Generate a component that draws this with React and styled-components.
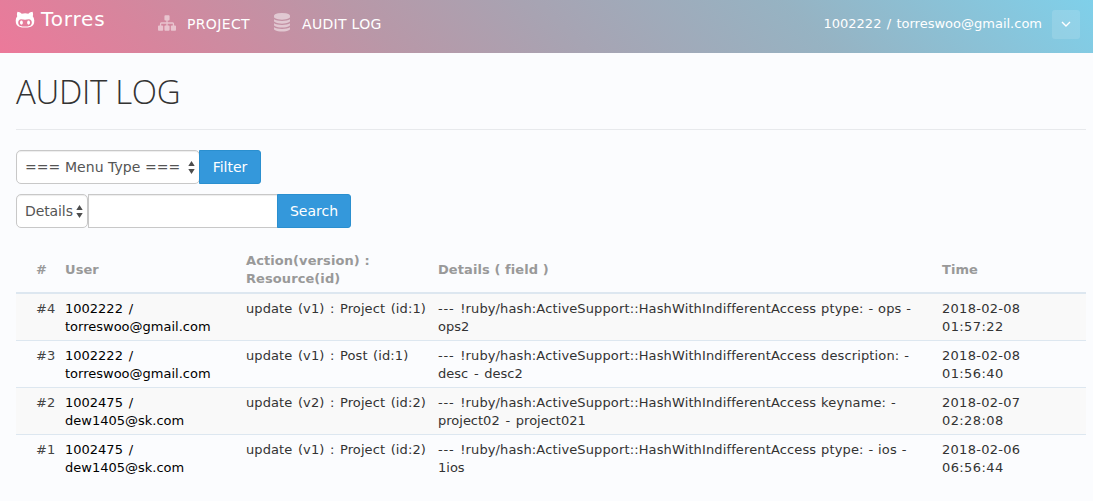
import React from "react";
import styled, { createGlobalStyle } from "styled-components";

const Global = createGlobalStyle`
  * { box-sizing: border-box; }
  html { background: #fff; }
  body { margin: 0; font-family: "DejaVu Sans", sans-serif; font-size: 13px; line-height: 18px; color: #333; overflow: hidden; }
`;

const Page = styled.div`
  height: 501px;
  background: #fbfcfe;
`;
const Navbar = styled.header`
  display: flex;
  align-items: flex-start;
  height: 53px;
  padding: 0 13px 0 15px;
  background: linear-gradient(45deg, #ec799a 0%, #d7859d 14%, #b898a8 35%, #a8a3b2 50%, #96b3c3 73%, #7fd0ea 100%);
  color: #fff;
`;
const Brand = styled.div`
  display: flex;
  align-items: center;
  gap: 6px;
  width: 143px;
  height: 38px;
  font-size: 20px;
  letter-spacing: 0.85px;
`;
const NavItem = styled.div`
  display: flex;
  align-items: center;
  height: 47px;
  width: ${(p) => p.$w}px;
  gap: ${(p) => p.$gap}px;
  font-size: 14px;
  letter-spacing: ${(p) => p.$ls}px;
  white-space: nowrap;
`;
const Account = styled.div`
  display: flex;
  align-items: center;
  gap: 10px;
  height: 48px;
  margin-left: auto;
  white-space: nowrap;
  word-spacing: 1.2px;
`;
const Toggle = styled.div`
  display: flex;
  align-items: center;
  justify-content: center;
  width: 28px;
  height: 29px;
  border-radius: 3px;
  background: rgba(255, 255, 255, 0.13);
`;
const Icon = styled.svg`
  display: block;
  flex: none;
  margin-bottom: ${(p) => p.$lift || 0}px;
  fill: ${(p) => p.$fill || "#fff"};
`;
const Main = styled.main`
  padding: 0 7px 0 16px;
`;
const Title = styled.h1`
  margin: 0 0 20px;
  height: 77px;
  padding-top: 16px;
  border-bottom: 1px solid #e7e9ec;
  font: 300 33px/46px "Open Sans", sans-serif;
  letter-spacing: -0.3px;
  color: #333;
`;
const FormRow = styled.div`
  display: flex;
  height: 34px;
  margin-bottom: 10px;
  font-size: 14px;
`;
const Field = styled.div`
  display: flex;
  align-items: center;
  justify-content: space-between;
  width: ${(p) => p.$w}px;
  padding: 0 4px 0 8px;
  border: 1px solid #c8c8c8;
  border-radius: ${(p) => (p.$square ? "0" : "5px")};
  background: #fff;
  box-shadow: inset 0 1px 1px rgba(0, 0, 0, 0.075);
  color: #555;
  letter-spacing: ${(p) => p.$ls || 0}px;
  white-space: nowrap;
`;
const Button = styled.div`
  display: flex;
  align-items: center;
  justify-content: center;
  width: ${(p) => p.$w}px;
  margin-left: -1px;
  border: 1px solid #2a8fcf;
  border-radius: 0 3px 3px 0;
  background: #3498db;
  color: #fff;
`;
const Table = styled.table`
  width: 1070px;
  margin-top: 18px;
  table-layout: fixed;
  border-collapse: separate;
  border-spacing: 0;
`;
const Th = styled.th`
  width: ${(p) => p.$w}px;
  padding: 6px 0 4px ${(p) => p.$pl || 0}px;
  border-bottom: 2px solid #dde7f0;
  text-align: left;
  vertical-align: middle;
  color: #999;
  white-space: nowrap;
  letter-spacing: 0.08px;
`;
const Row = styled.tr`
  background: ${(p) => (p.$shaded ? "#f9f9f9" : "transparent")};
`;
const Td = styled.td`
  padding: 6px 0 4px ${(p) => p.$pl || 0}px;
  border-top: ${(p) => (p.$first ? "0" : "1px")} solid #dde7f0;
  vertical-align: top;
  color: ${(p) => p.$color || "#333"};
  white-space: nowrap;
`;
const Line = styled.div`
  letter-spacing: ${(p) => p.$ls || 0}px;
  word-spacing: ${(p) => p.$ws || 0}px;
`;
const Dashes = styled.span`
  letter-spacing: 0.85px;
`;

const rows = [
  ["#4", "1002222 /", "torreswoo@gmail.com", "update (v1) : Project (id:1)", "ptype: - ops -", "ops2", "2018-02-08", "01:57:22"],
  ["#3", "1002222 /", "torreswoo@gmail.com", "update (v1) : Post (id:1)", "description: -", "desc - desc2", "2018-02-08", "01:56:40"],
  ["#2", "1002475 /", "dew1405@sk.com", "update (v2) : Project (id:2)", "keyname: -", "project02 - project021", "2018-02-07", "02:28:08"],
  ["#1", "1002475 /", "dew1405@sk.com", "update (v1) : Project (id:2)", "ptype: - ios -", "1ios", "2018-02-06", "06:56:44"],
];

const Cat = () => (
  <Icon width="20" height="20" viewBox="0 0 1792 1792">
    <path d="M704 1216q0 40-12.5 82t-43 76-72.5 34-72.5-34-43-76-12.5-82 12.5-82 43-76 72.5-34 72.5 34 43 76 12.5 82zm640 0q0 40-12.5 82t-43 76-72.5 34-72.5-34-43-76-12.5-82 12.5-82 43-76 72.5-34 72.5 34 43 76 12.5 82zm160 0q0-120-69-204t-187-84q-41 0-195 21-71 11-157 11t-157-11q-152-21-195-21-118 0-187 84t-69 204q0 88 32 153.5t81 103 122 60 140 29.5 149 7h168q82 0 149-7t140-29.5 122-60 81-103 32-153.5zm224-176q0 207-61 331-38 77-105.5 133t-141 86-170 47.5-171.5 22-167 4.5q-78 0-142-3t-147.5-12.5-152.5-30-137-51.5-121-81-86-115q-62-123-62-331 0-237 136-396-27-82-27-170 0-116 51-218 108 0 190 39.5t189 123.5q147-35 309-35 148 0 280 32 105-82 187-121t189-39q51 102 51 218 0 87-27 168 136 160 136 398z" />
  </Icon>
);
const Sitemap = () => (
  <Icon $lift={2} width="18" height="18" viewBox="0 0 1792 1792" $fill="rgba(255,255,255,.5)">
    <path d="M1792 1248v320q0 40-28 68t-68 28h-320q-40 0-68-28t-28-68v-320q0-40 28-68t68-28h96v-192h-512v192h96q40 0 68 28t28 68v320q0 40-28 68t-68 28h-320q-40 0-68-28t-28-68v-320q0-40 28-68t68-28h96v-192h-512v192h96q40 0 68 28t28 68v320q0 40-28 68t-68 28h-320q-40 0-68-28t-28-68v-320q0-40 28-68t68-28h96v-192q0-52 38-90t90-38h512v-192h-96q-40 0-68-28t-28-68v-320q0-40 28-68t68-28h320q40 0 68 28t28 68v320q0 40-28 68t-68 28h-96v192h512q52 0 90 38t38 90v192h96q40 0 68 28t28 68z" />
  </Icon>
);
const Database = () => (
  <Icon $lift={2} width="16" height="18.6" viewBox="0 0 1536 1792" $fill="rgba(255,255,255,.5)">
    <path d="M768 768q237 0 443-43t325-127v170q0 69-103 128t-280 93.5-385 34.5-385-34.5-280-93.5-103-128v-170q119 84 325 127t443 43zm0 768q237 0 443-43t325-127v170q0 69-103 128t-280 93.5-385 34.5-385-34.5-280-93.5-103-128v-170q119 84 325 127t443 43zm0-384q237 0 443-43t325-127v170q0 69-103 128t-280 93.5-385 34.5-385-34.5-280-93.5-103-128v-170q119 84 325 127t443 43zm0-1152q208 0 385 34.5t280 93.5 103 128v128q0 69-103 128t-280 93.5-385 34.5-385-34.5-280-93.5-103-128v-128q0-69 103-128t280-93.5 385-34.5z" />
  </Icon>
);
const Arrows = () => (
  <Icon width="7" height="13" viewBox="0 0 7 13" $fill="#4d4d4d">
    <path d="M3.5 0L6.7 5H.3zM3.5 13L.3 8h6.4z" />
  </Icon>
);

export default function App() {
  return (
    <Page>
      <Global />
      <Navbar>
        <Brand><Cat />Torres</Brand>
        <NavItem $w={116} $gap={11} $ls={0.35}><Sitemap />PROJECT</NavItem>
        <NavItem $w={120} $gap={12} $ls={0.3}><Database />AUDIT LOG</NavItem>
        <Account>
          1002222 / torreswoo@gmail.com
          <Toggle>
            <svg width="10" height="6" viewBox="0 0 10 6" fill="none" stroke="#fff" strokeWidth="1.4"><path d="M1 1l4 4 4-4" /></svg>
          </Toggle>
        </Account>
      </Navbar>
      <Main>
        <Title>AUDIT LOG</Title>
        <FormRow>
          <Field $w={184} $ls={0.06}>=== Menu Type ===<Arrows /></Field>
          <Button $w={62}>Filter</Button>
        </FormRow>
        <FormRow>
          <Field $w={72} $ls={-0.1}>Details<Arrows /></Field>
          <Field $w={190} $square />
          <Button $w={74}>Search</Button>
        </FormRow>
        <Table>
          <thead>
            <tr>
              <Th $w={49} $pl={20}>#</Th>
              <Th $w={181}>User</Th>
              <Th $w={192}>Action(version) :<br />Resource(id)</Th>
              <Th $w={504}>Details ( field )</Th>
              <Th $w={144}>Time</Th>
            </tr>
          </thead>
          <tbody>
            {rows.map((r, i) => (
              <Row key={r[0]} $shaded={i % 2 === 0}>
                <Td $first={i === 0} $pl={20} $color="#444">{r[0]}</Td>
                <Td $first={i === 0} $color="#000">
                  <Line $ws={1.7}>{r[1]}</Line>
                  <Line>{r[2]}</Line>
                </Td>
                <Td $first={i === 0}><Line $ls={0.1} $ws={1.3}>{r[3]}</Line></Td>
                <Td $first={i === 0}>
                  <Line $ls={0.13} $ws={0.6}><Dashes>--- </Dashes>!ruby/hash:ActiveSupport::HashWithIndifferentAccess {r[4]}</Line>
                  <Line $ws={1.6}>{r[5]}</Line>
                </Td>
                <Td $first={i === 0}>
                  <Line $ls={0.28}>{r[6]}</Line>
                  <Line $ls={0.4}>{r[7]}</Line>
                </Td>
              </Row>
            ))}
          </tbody>
        </Table>
      </Main>
    </Page>
  );
}
